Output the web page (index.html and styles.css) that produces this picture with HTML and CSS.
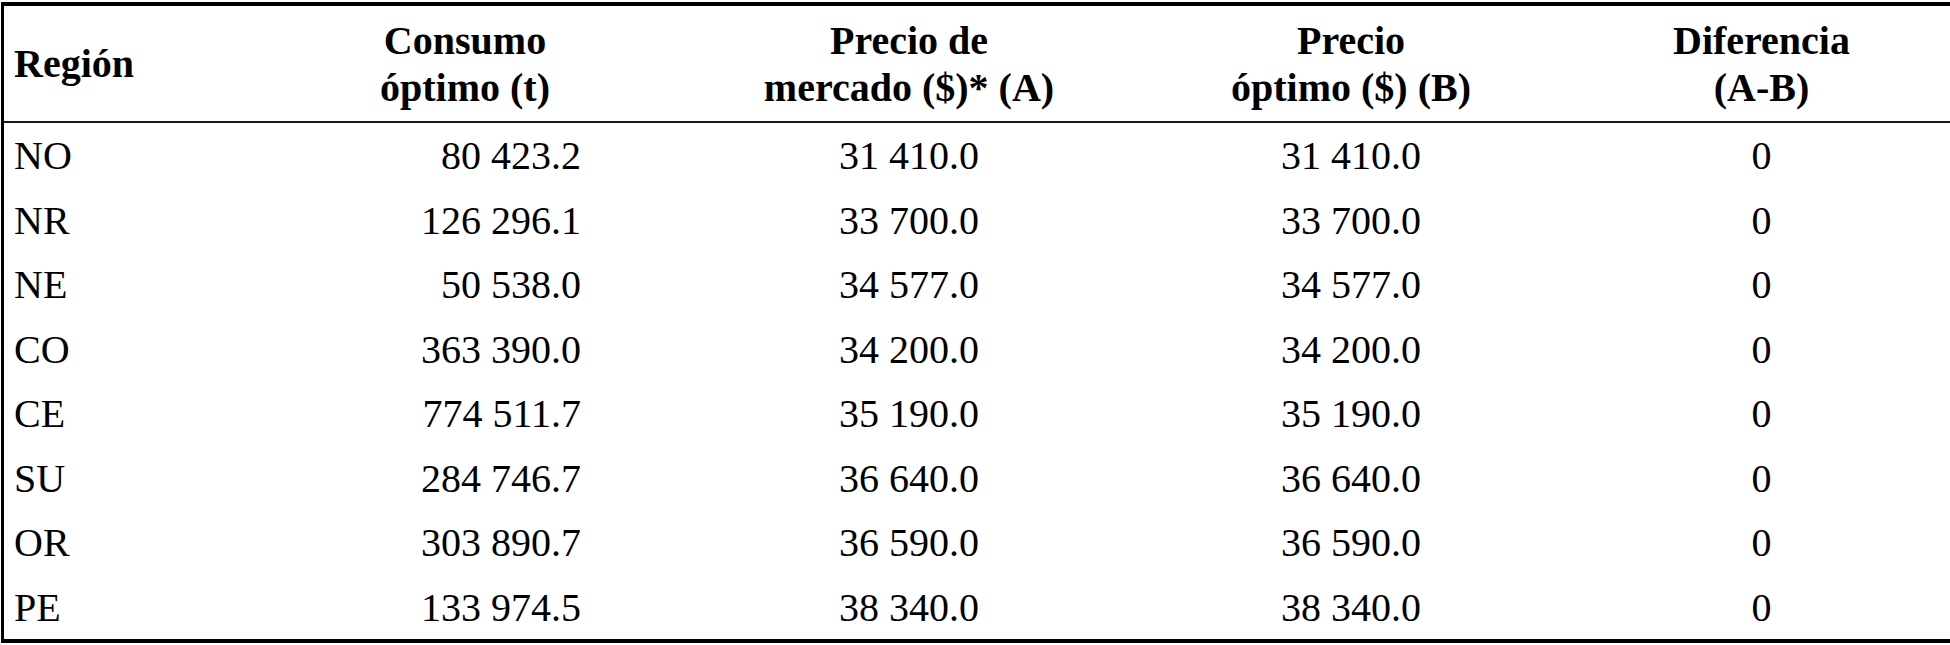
FILE: index.html
```html
<!DOCTYPE html>
<html lang="es">
<head>
<meta charset="utf-8">
<title>Tabla</title>
<link rel="stylesheet" href="styles.css">
</head>
<body>
<table class="data">
  <colgroup>
    <col class="c-region">
    <col class="c-consumo">
    <col class="c-mercado">
    <col class="c-optimo">
    <col class="c-dif">
  </colgroup>
  <thead>
    <tr>
      <th class="left">Región</th>
      <th>Consumo<br>óptimo (t)</th>
      <th>Precio de<br>mercado ($)* (A)</th>
      <th>Precio<br>óptimo ($) (B)</th>
      <th>Diferencia<br>(A-B)</th>
    </tr>
  </thead>
  <tbody>
    <tr><td class="left">NO</td><td class="num">80 423.2</td><td>31 410.0</td><td>31 410.0</td><td>0</td></tr>
    <tr><td class="left">NR</td><td class="num">126 296.1</td><td>33 700.0</td><td>33 700.0</td><td>0</td></tr>
    <tr><td class="left">NE</td><td class="num">50 538.0</td><td>34 577.0</td><td>34 577.0</td><td>0</td></tr>
    <tr><td class="left">CO</td><td class="num">363 390.0</td><td>34 200.0</td><td>34 200.0</td><td>0</td></tr>
    <tr><td class="left">CE</td><td class="num">774 511.7</td><td>35 190.0</td><td>35 190.0</td><td>0</td></tr>
    <tr><td class="left">SU</td><td class="num">284 746.7</td><td>36 640.0</td><td>36 640.0</td><td>0</td></tr>
    <tr><td class="left">OR</td><td class="num">303 890.7</td><td>36 590.0</td><td>36 590.0</td><td>0</td></tr>
    <tr><td class="left">PE</td><td class="num">133 974.5</td><td>38 340.0</td><td>38 340.0</td><td>0</td></tr>
  </tbody>
</table>
</body>
</html>
```

FILE: styles.css
```css
html, body {
  margin: 0;
  padding: 0;
  background: #ffffff;
}

body {
  padding: 2px 0 0 1px;
  font-family: "Liberation Serif", "Times New Roman", serif;
  color: #000000;
}

.data {
  table-layout: fixed;
  width: 1948px;
  border-collapse: separate;
  border-spacing: 0;
  border-top: 4px solid #000000;
  border-left: 3px solid #000000;
  border-bottom: 4px solid #000000;
  font-size: 40px;
}

.c-region { width: 239px; }
.c-consumo { width: 444px; }
.c-mercado { width: 444px; }
.c-optimo { width: 440px; }
.c-dif { width: 381px; }

.data th {
  height: 115px;
  padding: 0;
  font-weight: bold;
  line-height: 47px;
  text-align: center;
  vertical-align: middle;
  border-bottom: 2px solid #1a1a1a;
}

.data td {
  height: 64.5px;
  padding: 2px 0 0 0;
  box-sizing: border-box;
  text-align: center;
  vertical-align: middle;
  line-height: 46px;
  white-space: nowrap;
}

.data th.left,
.data td.left {
  text-align: left;
  padding-left: 10px;
}

.data td.num {
  text-align: right;
  padding-right: 106px;
}
```
